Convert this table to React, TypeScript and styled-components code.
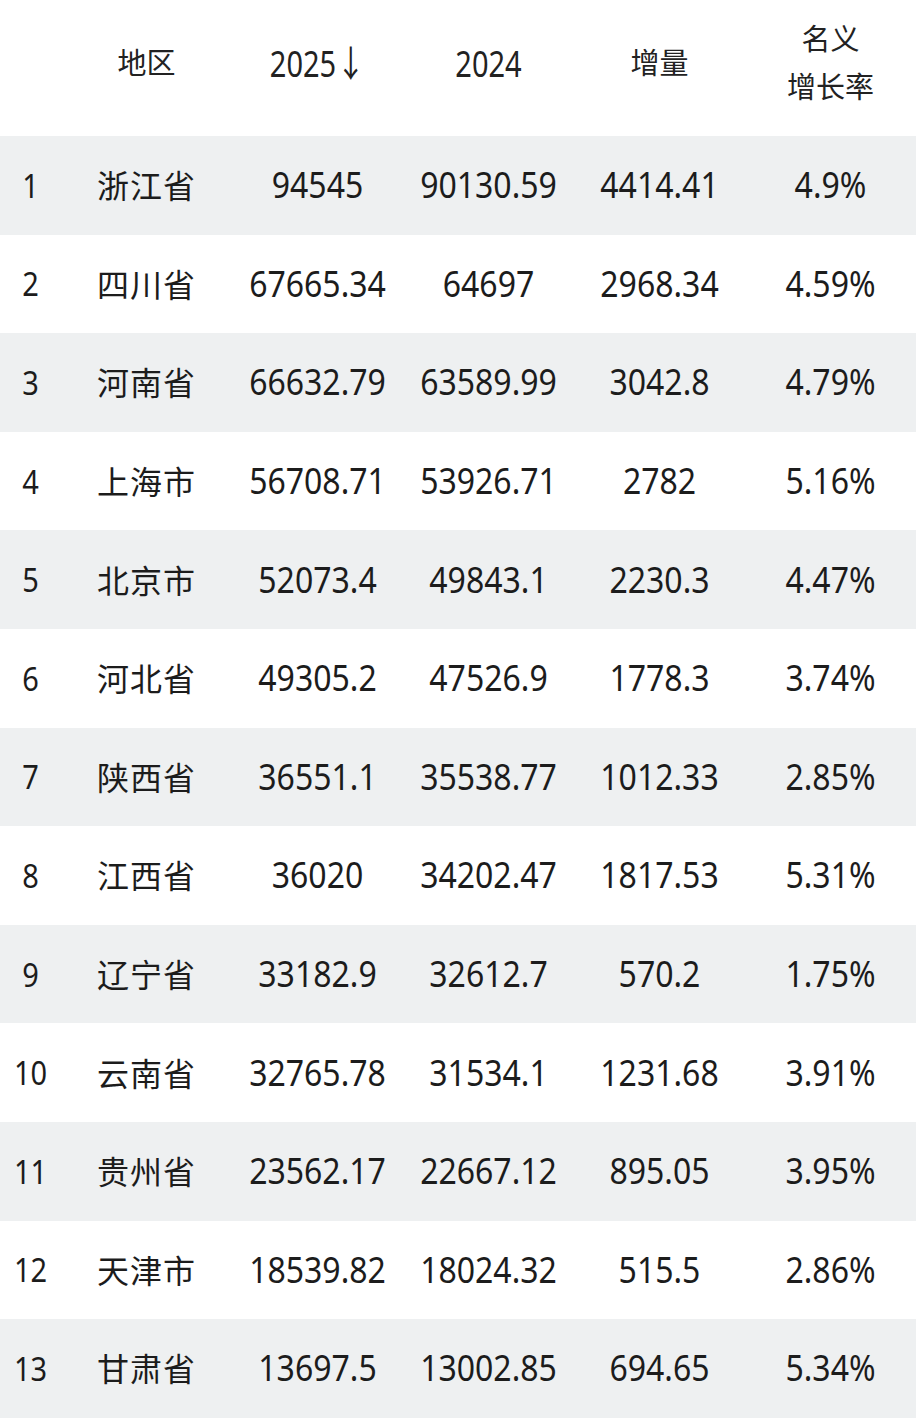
import React from 'react';
import styled, { createGlobalStyle } from 'styled-components';

const GlobalStyle = createGlobalStyle`
  html, body {
    margin: 0;
    padding: 0;
    background: #ffffff;
  }
  body {
    font-family: "Noto Sans", "Noto Sans CJK SC", sans-serif;
    color: #1c1c1c;
  }
`;

const Table = styled.div`
  width: 916px;
  display: flex;
  flex-direction: column;
`;

const Grid = styled.div`
  display: grid;
  grid-template-columns: 61px repeat(5, 1fr);
  align-items: center;
`;

const HeaderRow = styled(Grid)`
  height: 136px;
  padding-bottom: 10px;
  box-sizing: border-box;
  font-size: 29px;
  color: #222;
`;

const HeaderCell = styled.div`
  text-align: center;
  line-height: 48px;
`;

const Row = styled(Grid)<{ $shaded: boolean }>`
  height: 98.6px;
  background: ${(p) => (p.$shaded ? '#eef0f1' : '#ffffff')};
  font-size: 32px;
`;

const Cell = styled.div`
  text-align: center;
  line-height: 1;
`;

const RankCell = styled(Cell)`
  font-size: 29px;
`;

const Region = styled.span`
  font-family: "Noto Sans CJK SC", sans-serif;
  letter-spacing: 1px;
`;

const Digits = styled.span<{ $stretch?: number }>`
  display: inline-block;
  transform: scaleY(${(p) => p.$stretch ?? 1.12});
`;

type Item = [string, string, string, string, string];

const rows: Item[] = [
  ['浙江省', '94545', '90130.59', '4414.41', '4.9%'],
  ['四川省', '67665.34', '64697', '2968.34', '4.59%'],
  ['河南省', '66632.79', '63589.99', '3042.8', '4.79%'],
  ['上海市', '56708.71', '53926.71', '2782', '5.16%'],
  ['北京市', '52073.4', '49843.1', '2230.3', '4.47%'],
  ['河北省', '49305.2', '47526.9', '1778.3', '3.74%'],
  ['陕西省', '36551.1', '35538.77', '1012.33', '2.85%'],
  ['江西省', '36020', '34202.47', '1817.53', '5.31%'],
  ['辽宁省', '33182.9', '32612.7', '570.2', '1.75%'],
  ['云南省', '32765.78', '31534.1', '1231.68', '3.91%'],
  ['贵州省', '23562.17', '22667.12', '895.05', '3.95%'],
  ['天津市', '18539.82', '18024.32', '515.5', '2.86%'],
  ['甘肃省', '13697.5', '13002.85', '694.65', '5.34%'],
];

const App: React.FC = () => {
  return (
    <>
      <GlobalStyle />
      <Table>
        <HeaderRow>
          <HeaderCell />
          <HeaderCell>地区</HeaderCell>
          <HeaderCell>
            <Digits $stretch={1.25}>2025↓</Digits>
          </HeaderCell>
          <HeaderCell>
            <Digits $stretch={1.25}>2024</Digits>
          </HeaderCell>
          <HeaderCell>增量</HeaderCell>
          <HeaderCell>
            名义
            <br />
            增长率
          </HeaderCell>
        </HeaderRow>
        {rows.map(([region, y2025, y2024, delta, rate], i) => (
          <Row key={region} $shaded={i % 2 === 0}>
            <RankCell>
              <Digits>{i + 1}</Digits>
            </RankCell>
            <Cell>
              <Region>{region}</Region>
            </Cell>
            <Cell>
              <Digits>{y2025}</Digits>
            </Cell>
            <Cell>
              <Digits>{y2024}</Digits>
            </Cell>
            <Cell>
              <Digits>{delta}</Digits>
            </Cell>
            <Cell>
              <Digits>{rate}</Digits>
            </Cell>
          </Row>
        ))}
      </Table>
    </>
  );
};

export default App;
